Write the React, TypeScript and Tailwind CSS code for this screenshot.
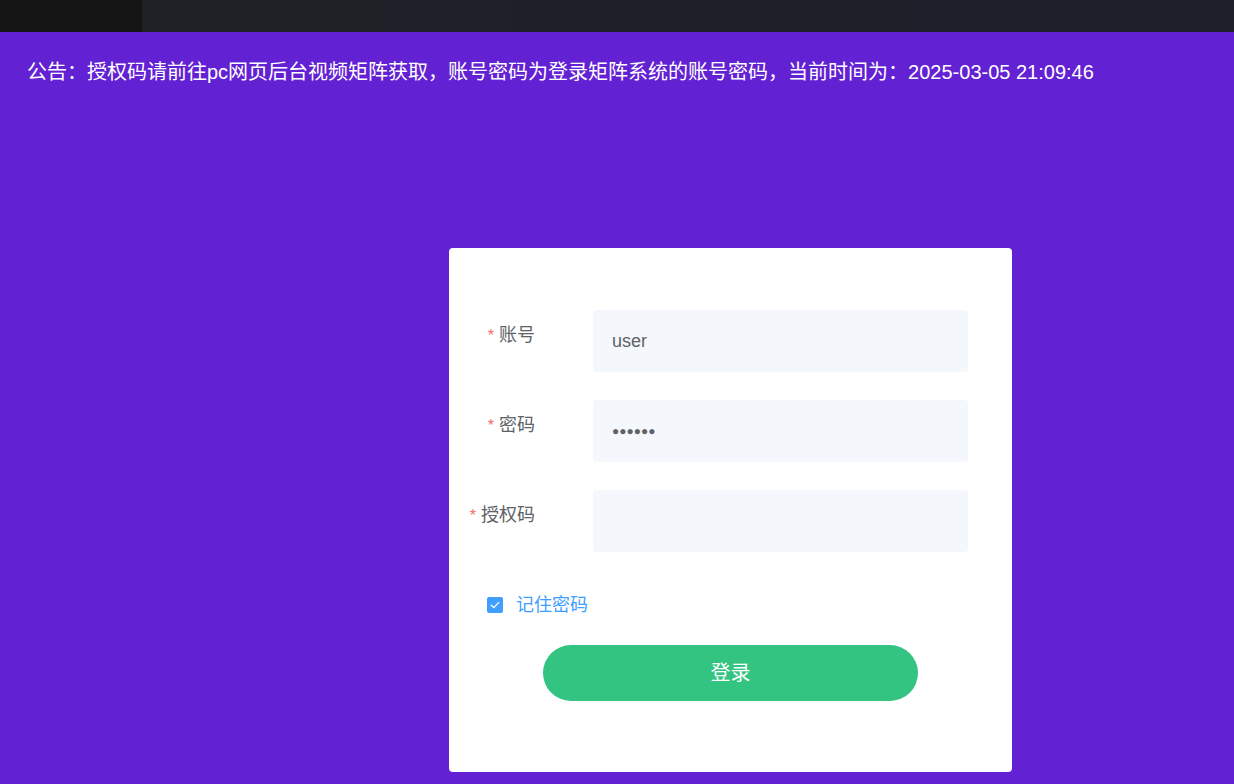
import React from "react";

const font = { fontFamily: '"Liberation Sans", "Noto Sans CJK SC", sans-serif' };

function Row({ label, value, dots }: { label: string; value?: string; dots?: boolean }) {
  return (
    <div className="flex items-start">
      <div className="w-[144px] pr-[58px] text-right leading-[50px] text-[18px] text-[#606266]">
        <span className="text-[#f56c6c] text-[16px] mr-[5px]">*</span>
        {label}
      </div>
      <div className="w-[375px] h-[62px] rounded-[4px] bg-[#f4f7fc] flex items-center px-[19px] text-[18px] text-[#606266]">
        {dots ? <span className="tracking-[0px] text-[12px]">●●●●●●</span> : value}
      </div>
    </div>
  );
}

export default function App() {
  return (
    <div className="w-full h-[784px] overflow-hidden bg-[#6321d4]" style={font}>
      <div className="h-[32px] flex">
        <div className="w-[142px] bg-[#141414]" />
        <div className="flex-1 bg-gradient-to-r from-[#1f2126] via-[#1e2029] to-[#1c1f2a]" />
      </div>
      <div className="pl-[27px] pt-[26px] text-white text-[20px] leading-[28px]">
        公告：授权码请前往pc网页后台视频矩阵获取，账号密码为登录矩阵系统的账号密码，当前时间为：2025-03-05 21:09:46
      </div>
      <div className="ml-[449px] mt-[162px] w-[563px] bg-white rounded-[4px] pt-[62px] pb-[71px]">
        <div className="flex flex-col gap-[28px]">
          <Row label="账号" value="user" />
          <Row label="密码" dots />
          <Row label="授权码" />
        </div>
        <div className="mt-[41px] h-[24px] flex items-center pl-[38px]">
          <div className="w-[16px] h-[16px] rounded-[2px] bg-[#409eff] flex items-center justify-center">
            <svg width="10" height="8" viewBox="0 0 10 8" fill="none">
              <path d="M1.2 4.2 L3.8 6.6 L8.8 1.4" stroke="white" strokeWidth="1.3" strokeLinecap="round" strokeLinejoin="round" />
            </svg>
          </div>
          <span className="ml-[13px] text-[18px] text-[#409eff]">记住密码</span>
        </div>
        <div className="mt-[28px] flex justify-center">
          <button className="w-[375px] h-[56px] rounded-full bg-[#32c480] text-white text-[20px]">登录</button>
        </div>
      </div>
    </div>
  );
}
